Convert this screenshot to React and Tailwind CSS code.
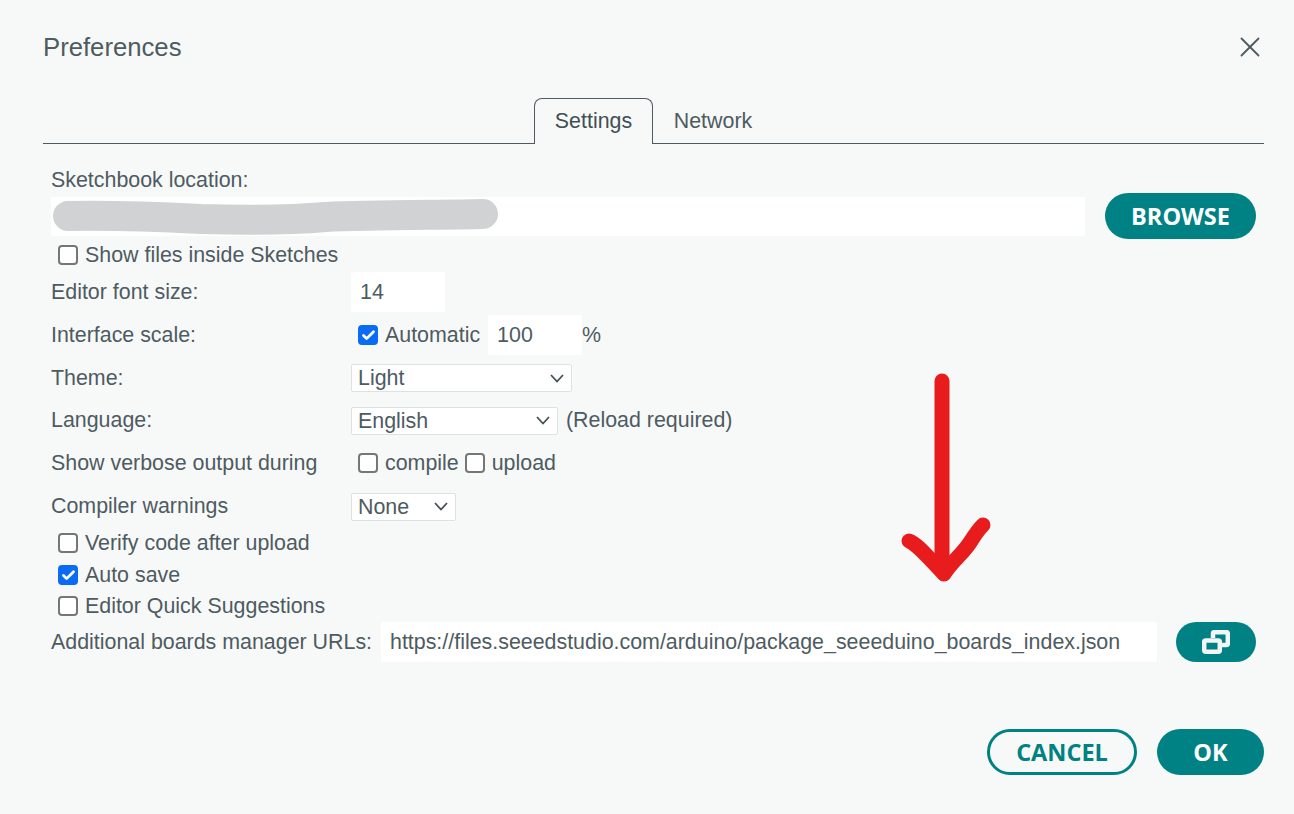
import { Check, X } from "lucide-react";

const textFont = "font-['Liberation_Sans',sans-serif]";

const Box = ({ checked }) => (
  <span
    className={`flex h-[20px] w-[20px] shrink-0 items-center justify-center rounded-[4px] border-2 ${
      checked ? "border-[#0a6cf5] bg-[#0a6cf5]" : "border-[#767676] bg-white"
    }`}
  >
    {checked && <Check size={15} strokeWidth={4.5} className="text-white" />}
  </span>
);

const Option = ({ label, checked, className = "" }) => (
  <label className={`flex items-center gap-[7px] ${className}`}>
    <Box checked={checked} />
    <span>{label}</span>
  </label>
);

const Select = ({ value, width }) => (
  <div className={`flex h-[28px] items-center justify-between rounded-[2px] border border-[#dae3e3] bg-white pl-[6px] pr-[7px] ${width}`}>
    <span>{value}</span>
    <svg width="14" height="9" viewBox="0 0 14 9" fill="none" stroke="#434f54" strokeWidth="1.8">
      <path d="M1 1 L7 7.5 L13 1" />
    </svg>
  </div>
);

const Row = ({ label, height, labelClass = "", children }) => (
  <div className={`flex items-center pl-[8px] ${height}`}>
    <div className={`w-[300px] shrink-0 ${labelClass}`}>{label}</div>
    {children}
  </div>
);

export default function App() {
  return (
    <div className={`relative flex h-[814px] w-[1294px] flex-col bg-[#f7f9f9] px-[43px] pr-[30px] text-[21.4px] leading-[24px] text-[#4e5b61] ${textFont}`}>
      <header className="flex h-[98px] items-start justify-between pt-[33px]">
        <h1 className="text-[25.7px] font-normal leading-[28px]">Preferences</h1>
        <X size={34} strokeWidth={1.3} className="mr-[-3px] mt-[-3px] text-[#4e5b61]" />
      </header>

      <nav className="flex h-[46px] justify-center border-b border-[#4e5b61]">
        <div className="flex h-[46px] w-[119px] items-center justify-center rounded-t-[8px] border border-b-0 border-[#4e5b61] bg-[#f7f9f9] pb-[2px] text-[#434f54]">
          Settings
        </div>
        <div className="flex h-[45px] w-[120px] items-center justify-center">Network</div>
      </nav>

      <section className="flex flex-col">
        <div className="flex h-[50px] items-end pl-[8px] pb-[2px]">Sketchbook location:</div>
        <div className="flex h-[46px] items-center pl-[8px] mt-[-1px]">
          <div className="relative h-[39px] w-[1034px] rounded-[2px] bg-white">
            <svg className="absolute left-0 top-0" width="460" height="39" viewBox="0 0 460 39">
              <path
                d="M17 19 C70 18 110 20 150 22 C190 23 240 23 275 20 C320 18 390 18 432 17"
                fill="none"
                stroke="#d1d2d4"
                strokeWidth="30"
                strokeLinecap="round"
              />
            </svg>
          </div>
          <button className="ml-[20px] h-[46px] w-[151px] rounded-full bg-[#008184] font-['Open_Sans',sans-serif] text-[23.5px] font-bold text-white">
            BROWSE
          </button>
        </div>
        <div className="flex h-[32px] items-center pl-[15px]">
          <Option label="Show files inside Sketches" />
        </div>
        <Row label="Editor font size:" height="h-[42px]">
          <div className="flex h-[40px] w-[94px] items-center rounded-[2px] bg-white pl-[9px]">14</div>
        </Row>
        <Row label="Interface scale:" height="h-[44px]">
          <Option label="Automatic" checked className="ml-[7px]" />
          <div className="ml-[8px] flex h-[40px] w-[94px] items-center rounded-[2px] bg-white pl-[9px]">100</div>
          <span>%</span>
        </Row>
        <Row label="Theme:" height="h-[42px]">
          <Select value="Light" width="w-[221px]" />
        </Row>
        <Row label="Language:" height="h-[43px]" labelClass="mb-[2px]">
          <Select value="English" width="w-[207px]" />
          <span className="mb-[2px] ml-[8px]">(Reload required)</span>
        </Row>
        <Row label="Show verbose output during" height="h-[43px]" labelClass="mb-[2px]">
          <Option label="compile" className="mb-[2px] ml-[7px]" />
          <Option label="upload" className="mb-[2px] ml-[6px]" />
        </Row>
        <Row label="Compiler warnings" height="h-[43px]" labelClass="mb-[2px]">
          <Select value="None" width="w-[105px]" />
        </Row>
        <div className="flex h-[30px] items-center pl-[15px]">
          <Option label="Verify code after upload" />
        </div>
        <div className="flex h-[34px] items-center pl-[15px]">
          <Option label="Auto save" checked />
        </div>
        <div className="flex h-[28px] items-center pl-[15px]">
          <Option label="Editor Quick Suggestions" />
        </div>
        <div className="mt-[2px] flex h-[40px] items-center pl-[8px]">
          <span className="w-[330px] shrink-0">Additional boards manager URLs:</span>
          <div className="flex h-[40px] w-[776px] items-center rounded-[2px] bg-white pl-[9px]">
            https://files.seeedstudio.com/arduino/package_seeeduino_boards_index.json
          </div>
          <button className="ml-[19px] flex h-[40px] w-[80px] items-center justify-center rounded-full bg-[#008184]">
            <svg width="28" height="24" viewBox="0 0 28 24" fill="none" stroke="#f2f6f6" strokeWidth="4.5">
              <path d="M11 8 V3.5 Q11 2.2 12.5 2.2 H24.5 Q25.8 2.2 25.8 3.5 V13.5 Q25.8 15 24.5 15 H19" />
              <rect x="2.2" y="10.5" width="15.6" height="11.3" rx="1.5" />
            </svg>
          </button>
        </div>
      </section>

      <footer className="mt-[67px] flex justify-end gap-[20px]">
        <button className="h-[46px] w-[150px] rounded-full border-[3px] border-[#008184] font-['Open_Sans',sans-serif] text-[23.5px] font-bold text-[#008184]">
          CANCEL
        </button>
        <button className="h-[46px] w-[107px] rounded-full bg-[#008184] font-['Open_Sans',sans-serif] text-[23.5px] font-bold text-white">
          OK
        </button>
      </footer>

      <svg className="absolute left-[895px] top-[368px]" width="100" height="220" viewBox="0 0 100 220" fill="none" stroke="#e81c1c" strokeWidth="15" strokeLinecap="round" strokeLinejoin="round">
        <path d="M47 13 V200" />
        <path d="M14 173 C22 176 30 186 49 206 C58 192 68 186 76 173 C81 165 84 161 88 157" />
      </svg>
    </div>
  );
}
